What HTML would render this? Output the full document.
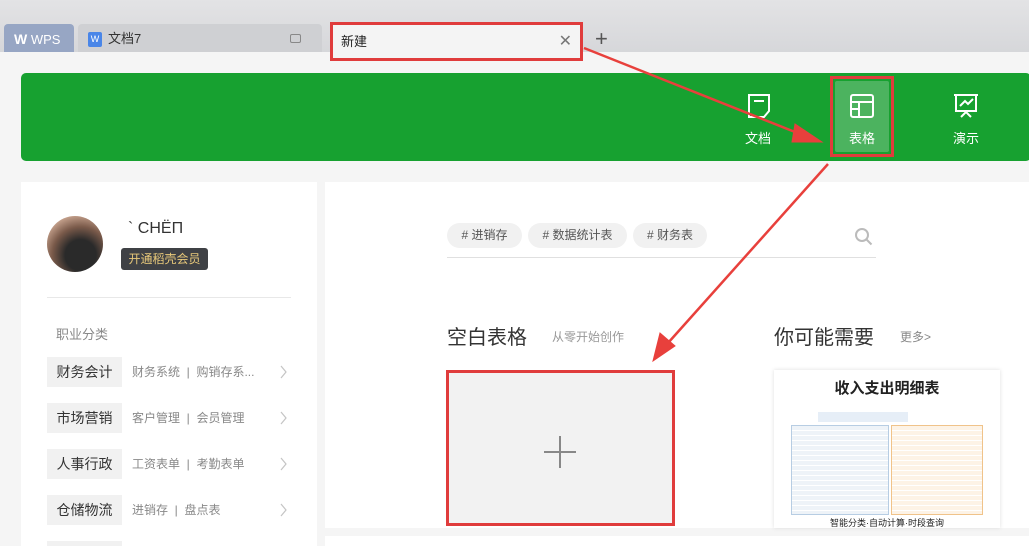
<!DOCTYPE html>
<html style="overflow:hidden;width:1029px;height:546px"><head><meta charset="utf-8"><style>
*{margin:0;padding:0;box-sizing:border-box}
body{width:1029px;height:546px;overflow:hidden;background:#f5f5f5;font-family:"Liberation Sans","Noto Sans CJK SC",sans-serif;position:relative}
.a{position:absolute}
.top{left:0;top:0;width:1029px;height:52px;background:linear-gradient(#e3e3e5,#d6d7da)}
.row{left:47px;height:30px;width:75px;background:#f1f1f1;font-size:14px;color:#333;line-height:30px;text-align:center}
.sub{left:132px;font-size:12px;color:#888;line-height:30px;height:30px}
.chev{left:280px}
.tag{top:223px;height:25px;border-radius:13px;background:#f1f1f1;font-size:12px;color:#555;line-height:25px;text-align:center}
.nav{top:90px;width:60px;text-align:center;color:#fff;font-size:13px}
</style></head><body>
<div class="a top"></div>
<div class="a" style="left:4px;top:24px;width:70px;height:28px;background:#97a6c4;border-radius:4px 4px 0 0;color:#fff;font-size:13px;line-height:30px;padding-left:10px"><b style="font-size:14px">W</b> WPS</div>
<div class="a" style="left:78px;top:24px;width:244px;height:28px;background:#cfd0d3;border-radius:4px 4px 0 0;font-size:13px;color:#333;line-height:30px;padding-left:30px">文档7</div>
<div class="a" style="left:88px;top:32px;width:14px;height:15px;background:#4a86e8;border-radius:2px;color:#fff;font-size:9px;text-align:center;line-height:15px">W</div>
<div class="a" style="left:290px;top:34px;width:11px;height:9px;border:1px solid #888;border-radius:2px"></div>
<div class="a" style="left:330px;top:22px;width:253px;height:39px;background:#f4f4f4;border:3px solid #e03c3c;font-size:13px;color:#222;line-height:33px;padding-left:8px">新建<span style="position:absolute;right:8px;top:0;color:#777;font-size:16px">✕</span></div>
<div class="a" style="left:595px;top:26px;font-size:22px;color:#555">+</div>
<div class="a" style="left:21px;top:73px;width:1010px;height:88px;background:#17a130;border-radius:5px"></div>
<div class="a" style="left:830px;top:76px;width:64px;height:81px;border:3px solid #e03c3c;background:#17a130"><div style="margin:2px;height:71px;background:#4cb35f;border-radius:2px"></div></div>
<svg class="a" style="left:747px;top:93px" width="24" height="26" fill="none" stroke="#fff" stroke-width="2"><path d="M2 2h20v16l-5 6H2z M7 8h10"/></svg>
<svg class="a" style="left:850px;top:94px" width="24" height="24" fill="none" stroke="#fff" stroke-width="2"><rect x="1" y="1" width="22" height="22" rx="2"/><path d="M1 8h22M9 8v15M1 15h8"/></svg>
<svg class="a" style="left:953px;top:93px" width="26" height="26" fill="none" stroke="#fff" stroke-width="2"><path d="M1 2h24M3 2v16h20V2M7 13l5-5 3 3 5-5M8 24l5-5 5 5"/></svg>
<div class="a nav" style="left:728px;top:128px">文档</div>
<div class="a nav" style="left:832px;top:128px">表格</div>
<div class="a nav" style="left:936px;top:128px">演示</div>
<div class="a" style="left:21px;top:182px;width:296px;height:364px;background:#fff"></div>
<div class="a" style="left:325px;top:182px;width:704px;height:346px;background:#fff"></div>
<div class="a" style="left:325px;top:536px;width:704px;height:10px;background:#fff"></div>
<div class="a" style="left:47px;top:216px;width:56px;height:56px;border-radius:50%;background:radial-gradient(circle at 60% 70%,#2a2a2a 30%,#7a5a4a 55%,#c9a590 80%)"></div>
<div class="a" style="left:128px;top:220px;font-size:16px;color:#333">` CHЁП</div>
<div class="a" style="left:121px;top:248px;width:87px;height:22px;background:#3f4145;border-radius:3px;color:#e8c97a;font-size:12px;line-height:22px;text-align:center">开通稻壳会员</div>
<div class="a" style="left:47px;top:297px;width:244px;height:1px;background:#e8e8e8"></div>
<div class="a" style="left:56px;top:324px;font-size:13px;color:#888">职业分类</div>
<div class="a row" style="top:357px">财务会计</div><div class="a sub" style="top:357px">财务系统 &nbsp;| &nbsp;购销存系...</div>
<div class="a row" style="top:403px">市场营销</div><div class="a sub" style="top:403px">客户管理 &nbsp;| &nbsp;会员管理</div>
<div class="a row" style="top:449px">人事行政</div><div class="a sub" style="top:449px">工资表单 &nbsp;| &nbsp;考勤表单</div>
<div class="a row" style="top:495px">仓储物流</div><div class="a sub" style="top:495px">进销存 &nbsp;| &nbsp;盘点表</div>
<div class="a row" style="top:541px;height:5px"></div>
<svg class="a" style="left:279px;top:364px" width="10" height="160" fill="none" stroke="#c4c4c4" stroke-width="1.2"><path d="M2 2l5 6-5 6M2 48l5 6-5 6M2 94l5 6-5 6M2 140l5 6-5 6"/></svg>
<div class="a tag" style="left:447px;width:75px"># 进销存</div>
<div class="a tag" style="left:528px;width:99px"># 数据统计表</div>
<div class="a tag" style="left:633px;width:74px"># 财务表</div>
<svg class="a" style="left:854px;top:227px" width="20" height="20" fill="none" stroke="#bbb" stroke-width="2"><circle cx="8" cy="8" r="6"/><path d="M12.5 12.5l5 5"/></svg>
<div class="a" style="left:447px;top:257px;width:429px;height:1px;background:#e0e0e0"></div>
<div class="a" style="left:447px;top:321px;font-size:20px;color:#333">空白表格</div>
<div class="a" style="left:552px;top:328px;font-size:12px;color:#999">从零开始创作</div>
<div class="a" style="left:774px;top:321px;font-size:20px;color:#333">你可能需要</div>
<div class="a" style="left:900px;top:328px;font-size:12px;color:#888">更多&gt;</div>
<div class="a" style="left:446px;top:370px;width:229px;height:156px;border:3px solid #e03c3c;background:#f2f2f2"></div>
<div class="a" style="left:544px;top:451px;width:32px;height:1.5px;background:#888"></div>
<div class="a" style="left:559px;top:436px;width:1.5px;height:32px;background:#888"></div>
<div class="a" style="left:774px;top:370px;width:226px;height:158px;background:#fff;box-shadow:0 0 4px #ddd"></div>
<div class="a" style="left:774px;top:377px;width:226px;text-align:center;font-size:15px;font-weight:bold;color:#222">收入支出明细表</div>
<div class="a" style="left:791px;top:425px;width:98px;height:90px;background:repeating-linear-gradient(#eef3f8 0 4px,#fff 4px 5px);border:1px solid #b7cde3"></div>
<div class="a" style="left:891px;top:425px;width:92px;height:90px;background:repeating-linear-gradient(#fdf3e6 0 4px,#fff 4px 5px);border:1px solid #f0c38a"></div>
<div class="a" style="left:818px;top:412px;width:90px;height:10px;background:#e6eef7"></div>
<div class="a" style="left:774px;top:516px;width:226px;text-align:center;font-size:9px;color:#222">智能分类·自动计算·时段查询</div>
<svg class="a" style="left:0;top:0" width="1029" height="546">
<g stroke="#e8403c" fill="#e8403c"><line x1="584" y1="48" x2="800" y2="134" stroke-width="2.5"/><polygon points="822,142 795,124 792,142"/>
<line x1="828" y1="164" x2="668" y2="343" stroke-width="2.5"/><polygon points="653,361 660,333 675,346"/></g></svg>
</body></html>
